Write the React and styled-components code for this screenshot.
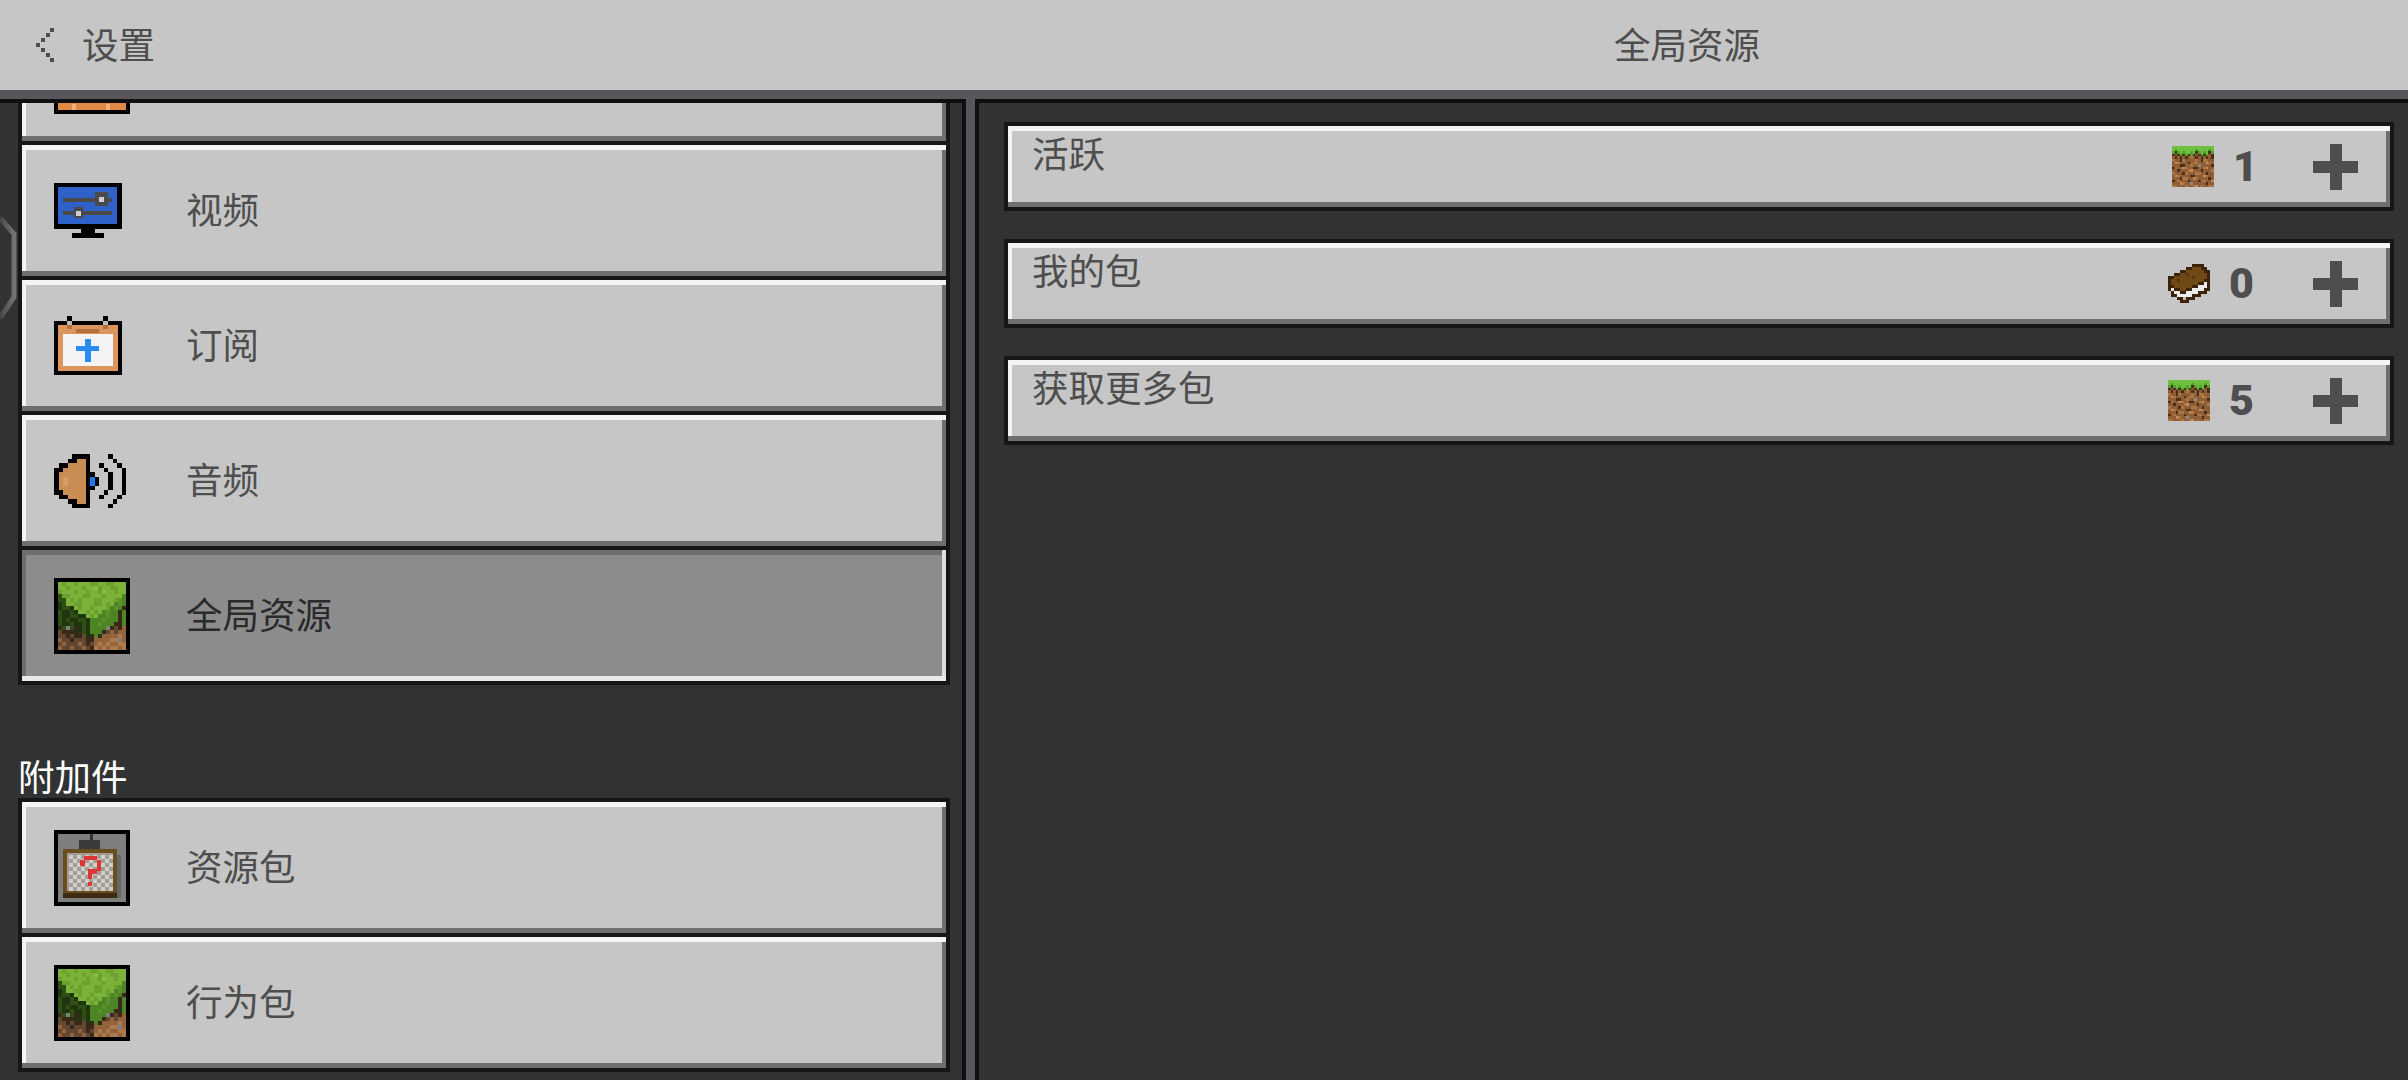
import styled, { createGlobalStyle } from "styled-components";

const GlobalStyle = createGlobalStyle`
    html, body {
        margin: 0;
        padding: 0;
        background: #313233;
    }
    body {
        font-family: "Noto Sans CJK SC", "Noto Sans", sans-serif;
    }
`;

const Page = styled.div`
    width: 2408px;
    height: 1080px;
    display: flex;
    flex-direction: column;
    overflow: hidden;
    position: relative;
    background: #313233;
`;

const Header = styled.header`
    height: 90px;
    flex: none;
    box-sizing: content-box;
    display: flex;
    align-items: center;
    background: #c6c6c6;
    border-bottom: 9px solid #58565a;
    color: #4e4e4e;
    font-size: 36.5px;
`;

const HeaderLeft = styled.div`
    width: 966px;
    flex: none;
    display: flex;
    align-items: center;
    padding-left: 36px;
    gap: 28px;
    box-sizing: border-box;
`;

const HeaderText = styled.span`
    margin-bottom: 3px;
`;

const HeaderTitle = styled.div`
    flex: 1;
    text-align: center;
    margin-bottom: 3px;
`;

const Body = styled.div`
    flex: 1;
    min-height: 0;
    display: flex;
    background: #58565a;
`;

const SidePanel = styled.aside`
    width: 966px;
    flex: none;
    box-sizing: border-box;
    border-top: 4px solid #0f0f0f;
    border-right: 4px solid #0f0f0f;
    background: #313233;
    padding-left: 18px;
    overflow: hidden;
`;

const SideList = styled.div`
    width: 932px;
    margin-top: -97px;
    display: flex;
    flex-direction: column;
`;

const SectionLabel = styled.div`
    height: 113px;
    display: flex;
    align-items: flex-end;
    color: #ffffff;
    font-size: 36.5px;
    line-height: 44px;
`;

const MenuCard = styled.div`
    height: 139px;
    box-sizing: border-box;
    border: 4px solid #161616;
    margin-top: ${(p) => (p.$joined ? "-4px" : "0")};
    padding-left: 32px;
    display: flex;
    align-items: center;
    color: ${(p) => (p.$active ? "#2a2a2a" : "#4e4e4e")};
    font-size: 36.5px;
    background: ${(p) => (p.$active ? "#8c8c8c" : "#c6c6c6")};
    box-shadow: ${(p) =>
        p.$active
            ? "inset 0 -5px 0 #e9e9e9, inset -4px 0 0 #dedede, inset 0 5px 0 #6e6e6e, inset 4px 0 0 #6e6e6e"
            : "inset 0 5px 0 #f4f4f4, inset 0 -5px 0 #6e6e6e, inset 4px 0 0 #f4f4f4, inset -4px 0 0 #6e6e6e"};
`;

const IconSlot = styled.div`
    width: 132px;
    flex: none;
    display: flex;
    align-items: center;
`;

const MenuLabel = styled.span`
    margin-bottom: 4px;
`;

const MainPanel = styled.main`
    flex: 1;
    margin-left: 9px;
    box-sizing: border-box;
    border-top: 4px solid #0f0f0f;
    border-left: 4px solid #0f0f0f;
    background: #313233;
    padding: 19px 14px 0 25px;
    display: flex;
    flex-direction: column;
    gap: 28px;
`;

const PackRow = styled.div`
    height: 89px;
    flex: none;
    box-sizing: border-box;
    border: 4px solid #161616;
    padding: 5px 32px 5px 24px;
    display: flex;
    justify-content: space-between;
    background: #c6c6c6;
    color: #4e4e4e;
    font-size: 36.5px;
    box-shadow: inset 0 5px 0 #f4f4f4, inset 0 -5px 0 #6e6e6e, inset 4px 0 0 #f4f4f4, inset -4px 0 0 #6e6e6e;
`;

const PackTitle = styled.div`
    line-height: 44px;
`;

const PackMeta = styled.div`
    display: flex;
    align-items: center;
`;

const PackCount = styled.span`
    width: ${(p) => (p.$narrow ? "19px" : "23px")};
    margin-left: 19px;
    margin-right: 61px;
    text-align: right;
    font-family: Roboto, sans-serif;
    font-weight: 900;
    font-size: 43px;
    line-height: 1;
    color: #4e4e4e;
`;

const EdgeTab = styled.svg`
    position: absolute;
    left: 0;
    top: 216px;
`;

// rows of characters, one rect per cell
function PixelArt({ rows, palette, cell, className }) {
    const width = rows[0].length * cell;
    const height = rows.length * cell;
    return (
        <svg className={className} width={width} height={height} viewBox={`0 0 ${width} ${height}`} shapeRendering="crispEdges">
            {rows.map((row, y) =>
                row.split("").map((c, x) =>
                    palette[c] ? <rect key={x + "-" + y} x={x * cell} y={y * cell} width={cell + 0.2} height={cell + 0.2} fill={palette[c]} /> : null
                )
            )}
        </svg>
    );
}

const SoftPixelArt = styled(PixelArt)`
    filter: blur(0.6px);
`;

const Framed = styled.div`
    width: 76px;
    height: 76px;
    box-sizing: border-box;
    border: 4px solid #000;
    display: flex;
    overflow: hidden;
    svg {
        filter: blur(0.7px);
    }
`;

const bigBlockPalette = {
    a: "#7db23a", b: "#6ba12d", c: "#8ab947", d: "#2f4f14", e: "#1f3510", f: "#38291a",
    g: "#644730", h: "#4d8424", i: "#5a9329", j: "#93643c", k: "#ab7a4d", s: "#7b7f80",
};
const bigBlockRows = [
    "abaabaaabbaabbaaa",
    "aabaaabaacbaabbaa",
    "baaabaabaabcaabaa",
    "dbbaaabbaaabaaaah",
    "ddababaaabbaaabih",
    "edaabbaaabbabahih",
    "eddeabaabaaabhihf",
    "deedeaababahihhfh",
    "deeddeeabahhihhfh",
    "dedeeddehhhihhhfh",
    "deedeedehhihhhffh",
    "fdsdfedehhhhsfgfj",
    "gfffefdehhhfgjgjj",
    "ggfgffgefhfjjjjkj",
    "jggfgggffjjjjkksj",
    "gjgggjgfgjkjkjjkk",
    "jggjggjgfkjkjkkjk",
];

function GrassBlock() {
    return (
        <Framed>
            <PixelArt rows={bigBlockRows} palette={bigBlockPalette} cell={4} />
        </Framed>
    );
}

function OrangeBox() {
    return (
        <Framed>
            <svg width="68" height="68" viewBox="0 0 68 68" shapeRendering="crispEdges">
                <rect width="68" height="68" fill="#e08a45" />
                <rect x="14" y="62" width="4" height="6" fill="#f0b17e" />
                <rect x="48" y="62" width="4" height="6" fill="#f0b17e" />
            </svg>
        </Framed>
    );
}

function MonitorIcon() {
    return (
        <svg width="68" height="55" viewBox="0 0 68 55" shapeRendering="crispEdges">
            <rect width="68" height="46" fill="#000" />
            <rect x="27" y="46" width="14" height="5" fill="#000" />
            <rect x="18" y="50" width="32" height="5" fill="#000" />
            <rect x="4" y="4" width="59" height="37" fill="#2f62c8" />
            <rect x="9" y="15" width="49" height="4" fill="#4a4a4a" />
            <rect x="9" y="28" width="49" height="4" fill="#4a4a4a" />
            <rect x="41" y="9" width="13" height="14" fill="#4a4a4a" />
            <rect x="45" y="14" width="5" height="5" fill="#cfcfcf" />
            <rect x="20" y="24" width="9" height="11" fill="#4a4a4a" />
            <rect x="22" y="28" width="5" height="5" fill="#cfcfcf" />
        </svg>
    );
}

function CalendarIcon() {
    return (
        <svg width="68" height="59" viewBox="0 0 68 59" shapeRendering="crispEdges">
            <rect y="5" width="68" height="54" fill="#000" />
            <rect x="13" width="5" height="5" fill="#000" />
            <rect x="49" width="5" height="5" fill="#000" />
            <rect x="4" y="9" width="60" height="46" fill="#d9975f" />
            <rect x="13" y="5" width="5" height="4" fill="#bdbdbd" />
            <rect x="49" y="5" width="5" height="4" fill="#bdbdbd" />
            <rect x="13" y="9" width="5" height="4" fill="#b5703c" />
            <rect x="49" y="9" width="5" height="4" fill="#b5703c" />
            <rect x="22" y="13" width="23" height="4" fill="#b5703c" />
            <rect x="9" y="18" width="50" height="32" fill="#f4f4f4" />
            <rect x="22" y="30" width="23" height="5" fill="#2b8cf0" />
            <rect x="31" y="23" width="6" height="23" fill="#2b8cf0" />
        </svg>
    );
}

const speakerRows = [
    "....KKKK....K...",
    "...KKOOK.....K..",
    ".KKOOOOK..K...K.",
    "KKOOOOOK...K...K",
    "KOOOOOOKK...K..K",
    "KOLOOOOKUK..K..K",
    "KOLOOOOKUK..K..K",
    "KOOOOOOKK...K..K",
    "KKOOOOOK...K...K",
    ".KKOOOOK..K...K.",
    "...KKOOK.....K..",
    "....KKKK....K...",
];

function SpeakerIcon() {
    return <PixelArt rows={speakerRows} palette={{ K: "#000", O: "#c98c52", L: "#d69c64", U: "#1a78f0" }} cell={4.5} />;
}

const checkerCells = [];
for (let y = 0; y < 5; y++) {
    for (let x = 0; x < 6; x++) {
        checkerCells.push([15 + x * 8, 25 + y * 8]);
        if (x < 5 && y < 4) checkerCells.push([19 + x * 8, 29 + y * 8]);
    }
}

function PaintingIcon() {
    return (
        <Framed>
            <svg width="68" height="68" viewBox="4 4 68 68" shapeRendering="crispEdges">
                <rect x="4" y="4" width="68" height="68" fill="#7e7e7e" />
                <rect x="36" y="4" width="3" height="8" fill="#333" />
                <rect x="25" y="10" width="21" height="9" fill="#3a3a3a" />
                <rect x="63" y="25" width="4" height="43" fill="#666" />
                <rect x="9" y="19" width="54" height="44" fill="#6b4e1f" />
                <rect x="9" y="63" width="54" height="5" fill="#3d2a10" />
                <rect x="13" y="23" width="46" height="38" fill="#a39d91" />
                {checkerCells.map(([x, y]) => (
                    <rect key={x + "-" + y} x={x} y={y} width="4" height="4" fill="#cfcfcf" />
                ))}
                <rect x="30" y="26" width="13" height="4" fill="#e03535" />
                <rect x="26" y="30" width="5" height="6" fill="#e03535" />
                <rect x="43" y="30" width="4" height="11" fill="#e03535" />
                <rect x="34" y="39" width="9" height="5" fill="#e03535" />
                <rect x="34" y="44" width="4" height="5" fill="#e03535" />
                <rect x="34" y="52" width="4" height="4" fill="#e03535" />
            </svg>
        </Framed>
    );
}

const smallBlockRows = [
    "GGGGGGGGGGGGGGGG",
    "GgGGGGGGGgGGGGgG",
    "gDgGgGGgGDgGgGDg",
    "DBDgDgDgDBDgDgBD",
    "BDBDBDBOBDBDBDBD",
    "OBBDOBBBBOBDOOBB",
    "BLOBBBDBOOBBBLOB",
    "BBBDDBBOBBSBBBBD",
    "DOBBLOBBDDBBOLBB",
    "BBDBBBOLBBBDBBBO",
    "OBBBDOBBBOOBBDBB",
    "BLOBBBBDDBBBLOBB",
    "BBBDOOBBLOBBBBDB",
    "DBOBBBDBBBDOOBBL",
    "BBBLOBBSBBBBBDBB",
    "OOBBBOBBOLBOBBOO",
];

function SmallBlock() {
    return (
        <SoftPixelArt
            rows={smallBlockRows}
            palette={{ G: "#6fc03f", g: "#54a02c", D: "#4a3019", B: "#8f5d36", O: "#ad7542", L: "#c08d58", S: "#8a8a8a" }}
            cell={2.6}
        />
    );
}

const bookRows = [
    "........BBBB..",
    "......BBMMMBB.",
    "....BBMMMMMMBB",
    "..BBMMNMMMMMMB",
    "BBMMMMMMNMMMMB",
    "BMMNMMMMMMMMBB",
    "BMMMMMMMMMBBPB",
    "BBMMMMMMBBPPPB",
    "BPBBMMBBPPPPBB",
    ".BPPBBPPPPBBB.",
    ".BBPPPPPBBB...",
    "...BBQBBB.....",
    "....BBB.......",
];

function BookIcon() {
    return <SoftPixelArt rows={bookRows} palette={{ B: "#3c2208", M: "#6f4816", N: "#553510", P: "#ececec", Q: "#b9b9b9" }} cell={3} />;
}

function PlusIcon() {
    return (
        <svg width="45" height="46" viewBox="0 0 45 46" shapeRendering="crispEdges">
            <rect x="17" width="12" height="46" fill="#4e4e4e" />
            <rect y="17" width="45" height="12" fill="#4e4e4e" />
        </svg>
    );
}

function BackIcon() {
    const dots = [[14, 0], [10, 5], [5, 10], [0, 15], [5, 20], [10, 25], [14, 30]];
    return (
        <svg width="18" height="34" viewBox="0 0 18 34" shapeRendering="crispEdges">
            {dots.map(([x, y]) => (
                <rect key={y} x={x} y={y} width="4" height="4" fill="#4e4e4e" />
            ))}
        </svg>
    );
}

const menuGroups = [
    {
        items: [
            { label: "", icon: <OrangeBox /> },
            { label: "视频", icon: <MonitorIcon /> },
            { label: "订阅", icon: <CalendarIcon /> },
            { label: "音频", icon: <SpeakerIcon /> },
            { label: "全局资源", icon: <GrassBlock />, active: true },
        ],
    },
    {
        title: "附加件",
        items: [
            { label: "资源包", icon: <PaintingIcon /> },
            { label: "行为包", icon: <GrassBlock /> },
        ],
    },
];

const packs = [
    { title: "活跃", count: 1, icon: <SmallBlock /> },
    { title: "我的包", count: 0, icon: <BookIcon /> },
    { title: "获取更多包", count: 5, icon: <SmallBlock /> },
];

export default function App() {
    return (
        <Page>
            <GlobalStyle />
            <Header>
                <HeaderLeft>
                    <BackIcon />
                    <HeaderText>设置</HeaderText>
                </HeaderLeft>
                <HeaderTitle>全局资源</HeaderTitle>
            </Header>
            <Body>
                <SidePanel>
                    <SideList>
                        {menuGroups.map((group, g) => (
                            <div key={g}>
                                {group.title && <SectionLabel>{group.title}</SectionLabel>}
                                {group.items.map((item, i) => (
                                    <MenuCard key={i} $joined={i > 0} $active={item.active}>
                                        <IconSlot>{item.icon}</IconSlot>
                                        <MenuLabel>{item.label}</MenuLabel>
                                    </MenuCard>
                                ))}
                            </div>
                        ))}
                    </SideList>
                </SidePanel>
                <MainPanel>
                    {packs.map((pack) => (
                        <PackRow key={pack.title}>
                            <PackTitle>{pack.title}</PackTitle>
                            <PackMeta>
                                {pack.icon}
                                <PackCount $narrow={pack.count === 1}>{pack.count}</PackCount>
                                <PlusIcon />
                            </PackMeta>
                        </PackRow>
                    ))}
                </MainPanel>
            </Body>
            <EdgeTab width="18" height="108" viewBox="0 0 18 108">
                <defs>
                    <linearGradient id="edgeTabFade" x1="0" x2="1" y1="0" y2="0">
                        <stop offset="0" stopColor="#454647" />
                        <stop offset="1" stopColor="#737373" />
                    </linearGradient>
                </defs>
                <path d="M0 2 L14 18 L14 81 L0 102" fill="none" stroke="url(#edgeTabFade)" strokeWidth="5" />
            </EdgeTab>
        </Page>
    );
}
